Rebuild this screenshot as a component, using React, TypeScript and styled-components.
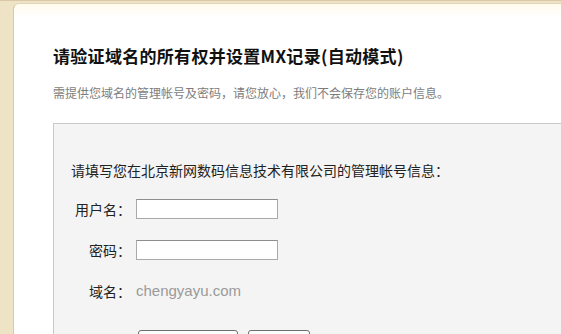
import React from "react";
import styled, { createGlobalStyle } from "styled-components";

const GlobalStyle = createGlobalStyle`
  html, body {
    margin: 0;
    padding: 0;
    overflow: hidden;
  }
  body {
    background: #eee3c4;
    font-family: "Noto Sans CJK SC", "Liberation Sans", sans-serif;
  }
`;

const Page = styled.div`
  padding: 2px 0 0 13px;
  border-top: 1px solid #dcc7a4;
`;

const Panel = styled.div`
  width: 720px;
  min-height: 420px;
  box-sizing: border-box;
  padding: 42px 0 0 39px;
  background: linear-gradient(#fffbee 0, #ffffff 14px);
  border-left: 1px solid #d6caa8;
  border-top: 1px solid #e2d6b8;
  border-top-left-radius: 6px;
`;

const Title = styled.h2`
  margin: 0;
  font-size: 17px;
  line-height: 20px;
  font-weight: 700;
  color: #111;
  letter-spacing: 0.3px;
`;

const Subtitle = styled.p`
  margin: 19px 0 0;
  font-size: 12px;
  line-height: 16px;
  color: #7d7d7d;
`;

const FormBox = styled.div`
  margin-top: 22px;
  padding: 36px 0 0 17px;
  min-height: 260px;
  background: #f4f4f4;
  border-top: 1px solid #c9c9c9;
  border-left: 1px solid #c9c9c9;
`;

const Intro = styled.p`
  margin: 0;
  font-size: 14px;
  line-height: 20px;
  color: #222;
`;

const FieldGrid = styled.div`
  display: grid;
  grid-template-columns: 60px auto;
  column-gap: 5px;
  row-gap: 21px;
  margin-top: 19px;
  justify-content: start;
  align-items: center;
`;

const Label = styled.label`
  font-size: 14px;
  line-height: 20px;
  color: #222;
  text-align: right;
  white-space: nowrap;
`;

const TextInput = styled.input`
  width: 142px;
  height: 20px;
  box-sizing: border-box;
  margin: 0;
  padding: 1px 3px;
  border: 1px solid #a9a9a9;
  border-top-color: #8e8e8e;
  background: #fff;
  font-size: 13px;
  outline: none;
`;

const DomainValue = styled.span`
  font-family: "Liberation Sans", Arial, sans-serif;
  font-size: 15px;
  line-height: 20px;
  color: #9a9a9a;
`;

const ButtonRow = styled.div`
  display: flex;
  gap: 10px;
  margin: 29px 0 0 67px;
`;

const Button = styled.button<{ $width: number }>`
  width: ${(p) => p.$width}px;
  height: 23px;
  padding: 0;
  border: 1px solid #6f6f6f;
  border-radius: 3px;
  background: linear-gradient(#ffffff, #ecebe6);
  font-family: "Noto Sans CJK SC", sans-serif;
  font-size: 14px;
  line-height: 20px;
  color: #111;
`;

export default function App() {
  return (
    <>
      <GlobalStyle />
      <Page>
        <Panel>
          <Title>请验证域名的所有权并设置MX记录(自动模式)</Title>
          <Subtitle>需提供您域名的管理帐号及密码，请您放心，我们不会保存您的账户信息。</Subtitle>
          <FormBox>
            <Intro>请填写您在北京新网数码信息技术有限公司的管理帐号信息：</Intro>
            <FieldGrid>
              <Label htmlFor="user">用户名：</Label>
              <TextInput id="user" type="text" />
              <Label htmlFor="pwd">密码：</Label>
              <TextInput id="pwd" type="password" />
              <Label>域名：</Label>
              <DomainValue>chengyayu.com</DomainValue>
            </FieldGrid>
            <ButtonRow>
              <Button $width={100}>开始认证</Button>
              <Button $width={62}>返回</Button>
            </ButtonRow>
          </FormBox>
        </Panel>
      </Page>
    </>
  );
}
